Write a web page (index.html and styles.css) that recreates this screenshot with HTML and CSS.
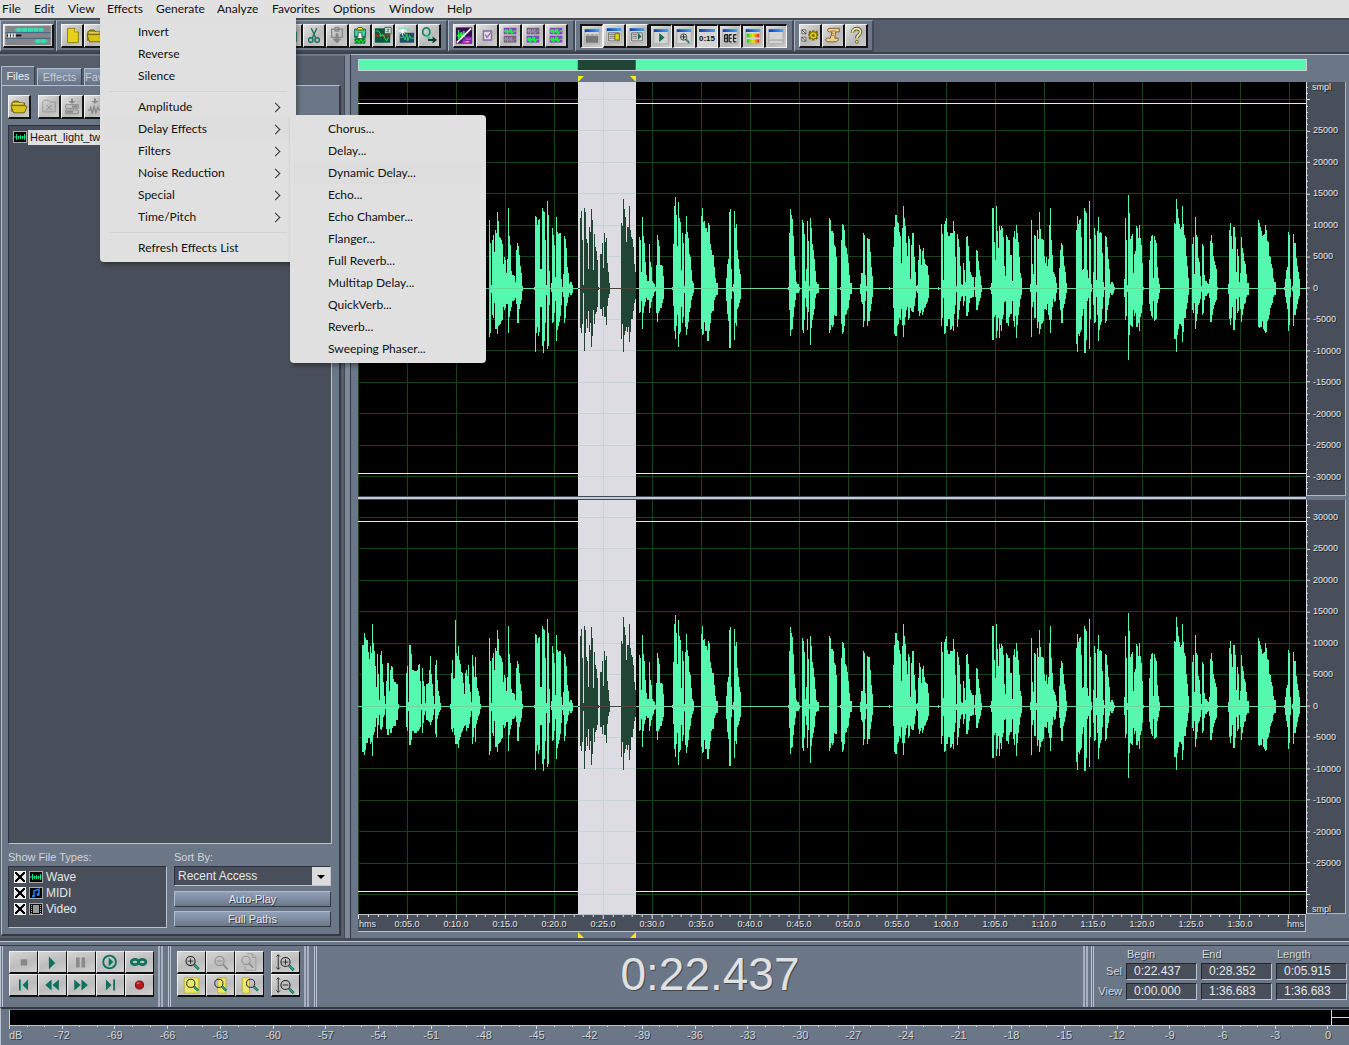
FILE: index.html
```html
<!DOCTYPE html>
<html lang="en">
<head>
<meta charset="utf-8">
<title>Audio editor</title>
<link rel="stylesheet" href="styles.css">
</head>
<body>
<svg class="defs" aria-hidden="true">
  <defs>
    <symbol id="new" viewBox="0 0 20 20"><path d="M5 2h8l4 4v12H5z" fill="#e6d21c" stroke="#8c7a00"/><path d="M13 2v4h4" fill="#fff6a0" stroke="#8c7a00"/></symbol>
    <symbol id="folder" viewBox="0 0 20 20"><path d="M2 16V6l2-2h5l2 2h5v3" fill="#b09a00" stroke="#5d5200"/><path d="M1 9h15l3 1-3 7H4z" fill="#d8c414" stroke="#6d6000"/><path d="M3 7h12" stroke="#fff38a"/></symbol>
    <symbol id="copy" viewBox="0 0 20 20"><path d="M5 2h8v11H5zM9 6h7v11H9z" fill="#c9eee2" stroke="#17705b"/><path d="M11 10h3M11 12h3M11 14h3" stroke="#17705b"/></symbol>
    <symbol id="cut" viewBox="0 0 20 20"><path d="M7 2l5 11M13 2L8 13" fill="none" stroke="#17705b" stroke-width="1.5"/><circle cx="6.500" cy="15" r="2.500" fill="none" stroke="#17705b" stroke-width="1.500"/><circle cx="13.500" cy="15" r="2.500" fill="none" stroke="#17705b" stroke-width="1.500"/></symbol>
    <symbol id="paste" viewBox="0 0 20 20"><path d="M4 3h12v9H4zM8 1h4v4H8z" fill="none" stroke="#8a8a8a" stroke-width="1.5"/><path d="M9 8h2v6h3l-4 4-4-4h3z" fill="#858585" stroke="#858585"/></symbol>
    <symbol id="pastemix" viewBox="0 0 20 20"><path d="M4 3h12v9H4z" fill="#3bd5ac" stroke="#105c46"/><path d="M8 1h4l2 3H6z" fill="#f2e52c" stroke="#554c00"/><path d="M8 7h4v4h3l-5 3-5-3h3z" fill="#fff" stroke="#222" stroke-width=".7"/><path d="M4 13h12v6H4z" fill="#073"/><path d="M4 18l3-3 2 3 2-4 2 4 3-4" fill="none" stroke="#21ff31"/></symbol>
    <symbol id="trim" viewBox="0 0 20 20"><path d="M1 2h17v16H1z" fill="#075643"/><path d="M1 10h17" stroke="#e01919" stroke-width="2"/><path d="M2 5h3l2 3v3l3-2 2 4 2 3 2-4" fill="none" stroke="#1dfa45"/><path d="M12 1h7v7h-7z" fill="#eee" stroke="#176653"/><path d="M14 3h3l-3 3h3" fill="none" stroke="#176653"/></symbol>
    <symbol id="zero" viewBox="0 0 20 20"><path d="M3 7h16v11H3z" fill="#244866"/><path d="M3 12h4v-2l2 5 2-7 1 8 2-6 1 3h4" fill="none" stroke="#20e65b"/><path d="M6 1v9M2 5h9M3 2l6 7M9 2L3 9" stroke="#fff"/><path d="M2 2h8M11 3h4" stroke="#35d9a9" stroke-dasharray="2 1"/></symbol>
    <symbol id="convert" viewBox="0 0 20 20"><ellipse cx="7" cy="6" rx="4" ry="4.500" fill="none" stroke="#178668" stroke-width="2"/><path d="M6 9c4 1 1 4 5 4" fill="none" stroke="#35c89d" stroke-width="2"/><path d="M9 14h5v-3l5 4-5 4v-3H9z" fill="#123f35"/></symbol>
    <symbol id="spectral" viewBox="0 0 20 20"><path d="M1 1h18v18H1z" fill="#3b0c53"/><path d="M11 11h8v8H6z" fill="#7d2aa8"/><path d="M2 10h2V4v10l3-8v8l3-9v7" fill="none" stroke="#23ef42" stroke-width="1.500"/><path d="M2 18L18 2" stroke="#eee" stroke-width="2"/><path d="M9 17h6M12 14h6" stroke="#e830df" stroke-width="2"/><path d="M12 17h4" stroke="#eee514"/></symbol>
    <symbol id="check" viewBox="0 0 20 20"><path d="M6 5h9v10H6z" fill="#ddd" stroke="#8c67b3" stroke-width="1.500"/><path d="M8 9l2 3 5-6" fill="none" stroke="#9a70c8" stroke-width="1.500"/></symbol>
    <symbol id="wavehalf" viewBox="0 0 20 8"><path d="M3 0h14v8H3z" fill="#8a3bd0"/><path d="M3 4h2V2v4l2-4v5l3-5v4l2-4v5l3-3h2" fill="none" stroke="#20ee3e" stroke-width="1.500"/></symbol>
    <symbol id="graywave" viewBox="0 0 20 8"><path d="M3 0h14v8H3z" fill="#73607f"/><path d="M3 4h2V2v4l2-4v5l3-5v4l2-4v5l3-3h2" fill="none" stroke="#a596ad"/></symbol>
    <symbol id="win" viewBox="0 0 20 20"><path d="M2 2h16v16H2z" fill="#d5d5d5" stroke="#aaa"/><path d="M2 2h16v3H2z" fill="url(#blue)"/></symbol>
    <symbol id="gear" viewBox="0 0 22 20"><path d="M1 3h5v5H1zM1 12h5v5H1z" fill="#ddd" stroke="#555"/><path d="M1 3l5 5M1 12l5 5" stroke="#333"/><path d="M9 9h12M15 4v12M10 5l10 9M20 5L10 14" stroke="#756300" stroke-width="3"/><circle cx="15" cy="10" r="4.500" fill="#dbc91c" stroke="#756300"/><circle cx="15" cy="10" r="1.500" fill="#554900"/></symbol>
    <symbol id="script" viewBox="0 0 20 20"><path d="M7 2h10v4h-4l-1 7h4c0 5-5 4-11 4-4 0-4-5 0-4h2l2-7H6c-3 0-3-4 1-4z" fill="#ecd091" stroke="#79571d"/><path d="M8 5h5M11 8h-2M11 10H8" stroke="#a57b31"/></symbol>
    <symbol id="help" viewBox="0 0 20 20"><path d="M6 7c0-6 9-6 9-1 0 4-4 3-4 7" fill="none" stroke="#5a553c" stroke-width="4"/><path d="M6 7c0-6 9-6 9-1 0 4-4 3-4 7" fill="none" stroke="#f1eb98" stroke-width="2"/><circle cx="11" cy="17" r="1.600" fill="#eee47c" stroke="#5a553c"/></symbol>
    <symbol id="closefile" viewBox="0 0 20 20"><path d="M3 16V5l2-2h4l2 2h6v11z" fill="none" stroke="#999"/><path d="M7 8l6 6M13 8l-6 6" stroke="#888"/></symbol>
    <symbol id="insert" viewBox="0 0 20 20"><path d="M9 1h2v3h3l-4 3-4-3h3z" fill="#888"/><path d="M3 8h14v4H3zM3 14h14v4H3z" fill="none" stroke="#888"/><path d="M10 10h6M4 16h7" stroke="#888" stroke-width="2"/></symbol>
    <symbol id="insertwave" viewBox="0 0 20 20"><path d="M9 1h2v3h3l-4 3-4-3h3z" fill="#888"/><path d="M2 14h3v-4l2 8 2-8 2 7 2-6 2 3h3" fill="none" stroke="#888" stroke-width="1.500"/></symbol>
    <symbol id="wavefile" viewBox="0 0 14 12"><path d="M0 0h14v12H0z" fill="#aaa"/><path d="M1 1h12v10H1z" fill="#000"/><path d="M1 6h12M3.500 3v6M5.500 5v3M7.500 4v4M9.500 5v3M11.500 3v6" stroke="#12dd83"/></symbol>
    <symbol id="midifile" viewBox="0 0 14 12"><path d="M0 0h14v12H0z" fill="#aaa"/><path d="M1 1h12v10H1z" fill="#000"/><path d="M5 9V4l5-2v5" fill="none" stroke="#1887ff" stroke-width="1.500"/><circle cx="4.500" cy="9" r="1.500" fill="#1887ff"/><circle cx="9" cy="7.500" r="1.500" fill="#1887ff"/></symbol>
    <symbol id="videofile" viewBox="0 0 14 12"><path d="M0 0h14v12H0z" fill="#aaa"/><path d="M1 1h12v10H1z" fill="#111"/><path d="M4 2h6v8H4z" fill="#999"/><path d="M2.500 2v9M11.500 2v9" stroke="#bbb" stroke-dasharray="1 1"/></symbol>
    <symbol id="lens" viewBox="0 0 20 20"><path d="M12 12l5 5" stroke="#176954" stroke-width="3"/><path d="M12 12l5 5" stroke="#2ee5a9"/><circle cx="8" cy="8" r="5" fill="none" stroke="#222" stroke-width="1.200"/></symbol>
    <symbol id="graylens" viewBox="0 0 20 20"><path d="M12 12l5 5" stroke="#8b8b8b" stroke-width="2"/><circle cx="8" cy="8" r="5" fill="none" stroke="#8b8b8b" stroke-width="1.200"/></symbol>
    <linearGradient id="blue"><stop stop-color="#133cae"/><stop offset="1" stop-color="#3da2f5"/></linearGradient>
    <linearGradient id="meter"><stop stop-color="#12c91a"/><stop offset=".5" stop-color="#eee514"/><stop offset="1" stop-color="#e92216"/></linearGradient>
  </defs>
</svg>

<nav class="menubar" aria-label="Main menu">
  <button>File</button><button>Edit</button><button>View</button>
  <div class="menu-holder">
    <button>Effects</button>
    <div class="popup effects-menu">
      <button>Invert</button><button>Reverse</button><button>Silence</button><hr>
      <button class="more">Amplitude</button>
      <div class="submenu-holder">
        <button class="more open">Delay Effects</button>
        <div class="popup delay-menu">
          <button>Chorus...</button><button>Delay...</button><button class="hover">Dynamic Delay...</button><button>Echo...</button><button>Echo Chamber...</button><button>Flanger...</button><button>Full Reverb...</button><button>Multitap Delay...</button><button>QuickVerb...</button><button>Reverb...</button><button>Sweeping Phaser...</button>
        </div>
      </div>
      <button class="more">Filters</button><button class="more">Noise Reduction</button><button class="more">Special</button><button class="more">Time/Pitch</button><hr>
      <button>Refresh Effects List</button>
    </div>
  </div>
  <button>Generate</button><button>Analyze</button><button>Favorites</button><button>Options</button><button>Window</button><button>Help</button>
</nav>

<header class="toolbar">
  <div class="group">
    <button class="tool wide" aria-label="Switch to multitrack view"><svg viewBox="0 0 48 20"><path d="M0 0h48v20H0z" fill="#83878b"/><path d="M0 7h48M0 13h48" stroke="#42617f"/><path d="M12 4h28M32 16h12" stroke="#36dfad" stroke-width="4" stroke-dasharray="5 1"/><path d="M10 4h31M30 16h15" stroke="#36dfad"/><path d="M2 10h15" stroke="#111" stroke-width="2"/><path d="M3 10h9" stroke="#eee" stroke-width="4" stroke-dasharray="2 1"/></svg></button>
  </div>
  <div class="group main-tools">
    <button class="tool" aria-label="New"><svg><use href="#new"/></svg></button>
    <button class="tool" aria-label="Open"><svg><use href="#folder"/></svg></button>
    <span class="tool-space"></span>
    <button class="tool" aria-label="Copy"><svg><use href="#copy"/></svg></button>
    <button class="tool" aria-label="Cut"><svg><use href="#cut"/></svg></button>
    <button class="tool" aria-label="Paste"><svg><use href="#paste"/></svg></button>
    <button class="tool" aria-label="Mix paste"><svg><use href="#pastemix"/></svg></button>
    <button class="tool" aria-label="Trim"><svg><use href="#trim"/></svg></button>
    <button class="tool" aria-label="Zero crossings"><svg><use href="#zero"/></svg></button>
    <button class="tool" aria-label="Convert"><svg><use href="#convert"/></svg></button>
  </div>
  <div class="group">
    <button class="tool" aria-label="Spectral view"><svg><use href="#spectral"/></svg></button>
    <button class="tool" aria-label="Snap"><svg><use href="#check"/></svg></button>
    <button class="tool" aria-label="Left channel"><svg viewBox="0 0 20 20"><use href="#wavehalf" width="20" y="1" height="8"/><use href="#graywave" width="20" y="10" height="8"/></svg></button>
    <button class="tool" aria-label="Right channel"><svg viewBox="0 0 20 20"><use href="#graywave" width="20" y="1" height="8"/><use href="#wavehalf" width="20" y="10" height="8"/></svg></button>
    <button class="tool" aria-label="Both channels"><svg viewBox="0 0 20 20"><use href="#wavehalf" width="20" y="1" height="8"/><use href="#wavehalf" width="20" y="10" height="8"/></svg></button>
  </div>
  <div class="group">
    <button class="tool pressed" aria-label="Organizer"><svg viewBox="0 0 20 20"><use href="#win"/><path d="M3 9h14v8H3z" fill="#777"/><path d="M4 8h3M9 8h3M14 8h2" stroke="#888"/></svg></button>
    <button class="tool" aria-label="Cue list"><svg viewBox="0 0 20 20"><use href="#win"/><path d="M4 7h12v9H4z" fill="none" stroke="#666"/><path d="M5 9h8M5 11h8M5 13h8" stroke="#777"/><path d="M11 8h5v7h-5z" fill="#ddd326" stroke="#766d00"/></svg></button>
    <button class="tool" aria-label="Play list"><svg viewBox="0 0 20 20"><use href="#win"/><path d="M4 7h12v9H4z" fill="none" stroke="#666"/><path d="M5 9h5M5 11h5M5 13h5" stroke="#777"/><path d="M11 7l4 4-4 4z" fill="#176954"/></svg></button>
    <button class="tool pressed" aria-label="Transport"><svg viewBox="0 0 20 20"><use href="#win"/><path d="M8 6l6 5-6 5z" fill="#176954"/></svg></button>
    <button class="tool pressed" aria-label="Zoom"><svg viewBox="0 0 20 20"><use href="#win"/><use href="#lens" x="4" y="5" width="14" height="14"/><path d="M7 10.500h5M9.500 8v5" stroke="#222"/></svg></button>
    <button class="tool pressed clock" aria-label="Time window">0:15</button>
    <button class="tool pressed" aria-label="Selection controls"><svg viewBox="0 0 20 20"><use href="#win"/><path d="M4 8h3v8H4h3M4 12h3M9 8h3M9 12h3M9 16h3M9 8v8M14 8h3M14 12h3M14 16h3M14 8v8M4 8v8" fill="none" stroke="#222" stroke-width="1.500"/></svg></button>
    <button class="tool pressed" aria-label="Level meters"><svg viewBox="0 0 20 20"><use href="#win"/><path d="M3 7h14v4H3zM3 13h14v4H3z" fill="url(#meter)"/></svg></button>
    <button class="tool pressed" aria-label="Status bar"><svg viewBox="0 0 20 20"><use href="#win"/><path d="M2 14h16" stroke="#999"/></svg></button>
  </div>
  <div class="group last">
    <button class="tool" aria-label="Settings"><svg><use href="#gear"/></svg></button>
    <button class="tool" aria-label="Scripts"><svg><use href="#script"/></svg></button>
    <button class="tool" aria-label="Help"><svg><use href="#help"/></svg></button>
  </div>
</header>

<main class="workspace">
  <aside class="organizer">
    <div class="tabs"><button class="active">Files</button><button>Effects</button><button>Favorites</button></div>
    <section class="tab-panel">
      <div class="file-tools">
        <button class="tool" aria-label="Open file"><svg><use href="#folder"/></svg></button>
        <button class="tool gap" aria-label="Close file"><svg><use href="#closefile"/></svg></button>
        <button class="tool" aria-label="Insert in multitrack"><svg><use href="#insert"/></svg></button>
        <button class="tool" aria-label="Edit file"><svg><use href="#insertwave"/></svg></button>
      </div>
      <div class="file-list"><div class="file"><svg><use href="#wavefile"/></svg><span>Heart_light_two</span></div></div>
      <div class="file-options">
        <fieldset>
          <legend>Show File Types:</legend>
          <div class="types">
            <label><input type="checkbox" checked><svg><use href="#wavefile"/></svg>Wave</label>
            <label><input type="checkbox" checked><svg><use href="#midifile"/></svg>MIDI</label>
            <label><input type="checkbox" checked><svg><use href="#videofile"/></svg>Video</label>
          </div>
        </fieldset>
        <div class="sorting">
          <label for="sort">Sort By:</label>
          <div class="select-box"><select id="sort"><option>Recent Access</option></select></div>
          <button>Auto-Play</button><button>Full Paths</button>
        </div>
      </div>
    </section>
  </aside>

  <section class="editor" aria-label="Waveform">
    <div class="overview"><svg viewBox="0 0 948 10" preserveAspectRatio="none"><path d="M219 0h58v10h-58z"/></svg></div>
    <svg class="markers" viewBox="0 0 948 6" preserveAspectRatio="none"><path d="M220 0h6l-6 6zM278 0h-6l6 6z"/></svg>
    <div class="wave-grid">
      <div class="tracks"><svg class="track" viewBox="0 0 948 414" preserveAspectRatio="none"></svg><svg class="track" viewBox="0 0 948 414" preserveAspectRatio="none"></svg></div>
      <div class="levels">
        <div class="scale upper"><svg class="level-ticks" viewBox="0 0 5 414" preserveAspectRatio="none"></svg><b>smpl</b><div><span>25000</span><span>20000</span><span>15000</span><span>10000</span><span>5000</span><span>0</span><span>-5000</span><span>-10000</span><span>-15000</span><span>-20000</span><span>-25000</span><span>-30000</span></div></div>
        <div class="scale lower"><svg class="level-ticks" viewBox="0 0 5 414" preserveAspectRatio="none"></svg><div><span>30000</span><span>25000</span><span>20000</span><span>15000</span><span>10000</span><span>5000</span><span>0</span><span>-5000</span><span>-10000</span><span>-15000</span><span>-20000</span><span>-25000</span></div><b>smpl</b></div>
      </div>
      <div class="timeline">
        <svg class="time-ticks" viewBox="0 0 948 5" preserveAspectRatio="none"></svg>
        <b>hms</b><div><span>0:05.0</span><span>0:10.0</span><span>0:15.0</span><span>0:20.0</span><span>0:25.0</span><span>0:30.0</span><span>0:35.0</span><span>0:40.0</span><span>0:45.0</span><span>0:50.0</span><span>0:55.0</span><span>1:00.0</span><span>1:05.0</span><span>1:10.0</span><span>1:15.0</span><span>1:20.0</span><span>1:25.0</span><span>1:30.0</span></div><b>hms</b>
      </div>
    </div>
    <svg class="markers bottom" viewBox="0 0 948 6" preserveAspectRatio="none"><path d="M220 0v6h6zM278 0v6h-6z"/></svg>
  </section>
</main>

<section class="controls">
  <div class="dock transport">
    <div class="keys five">
      <button aria-label="Stop"><svg viewBox="0 0 28 22"><path d="M11 8h7v7h-7z" fill="#888"/></svg></button>
      <button aria-label="Play"><svg viewBox="0 0 28 22"><path d="M10 5l7 7-7 7z" fill="#0c725d"/></svg></button>
      <button aria-label="Pause"><svg viewBox="0 0 28 22"><path d="M8 6h4v11H8zM14 6h4v11h-4z" fill="#8a8a8a"/></svg></button>
      <button aria-label="Play to end"><svg viewBox="0 0 28 22"><circle cx="13" cy="11" r="7" fill="none" stroke="#0c725d" stroke-width="2"/><path d="M12 6l5 5-5 5z" fill="#0c725d"/></svg></button>
      <button aria-label="Loop"><svg viewBox="0 0 28 22"><ellipse cx="9" cy="11" rx="4" ry="3" fill="none" stroke="#0c725d" stroke-width="3"/><ellipse cx="17" cy="11" rx="4" ry="3" fill="none" stroke="#0c725d" stroke-width="3"/></svg></button>
      <button aria-label="Go to beginning"><svg viewBox="0 0 28 22"><path d="M9 5h2v12H9zM19 5v12l-6-6z" fill="#0c725d"/></svg></button>
      <button aria-label="Rewind"><svg viewBox="0 0 28 22"><path d="M13 5v12l-7-6zM21 5v12l-7-6z" fill="#0c725d"/></svg></button>
      <button aria-label="Fast forward"><svg viewBox="0 0 28 22"><path d="M6 5l7 6-7 6zM14 5l7 6-7 6z" fill="#0c725d"/></svg></button>
      <button aria-label="Go to end"><svg viewBox="0 0 28 22"><path d="M9 5l6 6-6 6zM17 5h2v12h-2z" fill="#0c725d"/></svg></button>
      <button aria-label="Record"><svg viewBox="0 0 28 22"><circle cx="14" cy="11" r="4.500" fill="#b7181c" stroke="#651014"/><path d="M11 9h3" stroke="#ff9994"/></svg></button>
    </div>
  </div>
  <div class="dock zooming">
    <div class="keys three">
      <button aria-label="Zoom in"><svg viewBox="0 0 28 22"><use href="#lens" x="5" y="2" width="20" height="20"/><path d="M10 10h6M13 7v6" stroke="#222"/></svg></button>
      <button aria-label="Zoom out"><svg viewBox="0 0 28 22"><use href="#graylens" x="5" y="2" width="20" height="20"/><path d="M10 10h6" stroke="#888"/></svg></button>
      <button aria-label="Zoom full"><svg viewBox="0 0 28 22"><path d="M11 2h6l4 4v14H9v-4" fill="none" stroke="#999"/><path d="M17 2v4h4" fill="none" stroke="#999"/><use href="#graylens" x="3" y="2" width="18" height="18"/></svg></button>
      <button aria-label="Zoom to selection"><svg viewBox="0 0 28 22"><path d="M6 3h16v17H6z" fill="#ebe76d" stroke="#b5ad31"/><use href="#lens" x="6" y="2" width="18" height="18"/></svg></button>
      <button aria-label="Zoom left edge"><svg viewBox="0 0 28 22"><path d="M11 3h9v17h-9z" fill="#ebe76d" stroke="#b5ad31"/><use href="#lens" x="5" y="2" width="18" height="18"/></svg></button>
      <button aria-label="Zoom right edge"><svg viewBox="0 0 28 22"><path d="M6 3h8v17H6z" fill="#ebe76d" stroke="#b5ad31"/><use href="#lens" x="8" y="2" width="18" height="18"/></svg></button>
    </div>
    <div class="keys one">
      <button aria-label="Vertical zoom in"><svg viewBox="0 0 28 22"><path d="M6 3v16M4 5l2-2 2 2M4 17l2 2 2-2" fill="none" stroke="#222"/><use href="#lens" x="6" y="3" width="20" height="20"/><path d="M11 11h6M14 8v6" stroke="#222"/></svg></button>
      <button aria-label="Vertical zoom out"><svg viewBox="0 0 28 22"><path d="M6 3v16M4 5l2-2 2 2M4 17l2 2 2-2" fill="none" stroke="#222"/><use href="#lens" x="6" y="3" width="20" height="20"/><path d="M11 11h6" stroke="#222"/></svg></button>
    </div>
  </div>
  <output class="dock time">0:22.437</output>
  <div class="dock selection">
    <table>
      <thead><tr><td></td><th>Begin</th><th>End</th><th>Length</th></tr></thead>
      <tbody>
        <tr><th>Sel</th><td><input aria-label="Selection begin" value="0:22.437"></td><td><input aria-label="Selection end" value="0:28.352"></td><td><input aria-label="Selection length" value="0:05.915"></td></tr>
        <tr><th>View</th><td><input aria-label="View begin" value="0:00.000"></td><td><input aria-label="View end" value="1:36.683"></td><td><input aria-label="View length" value="1:36.683"></td></tr>
      </tbody>
    </table>
  </div>
</section>

<footer class="meter">
  <div class="meter-bar"><i></i><em></em></div>
  <svg class="meter-ticks" viewBox="0 0 1340 4" preserveAspectRatio="none"></svg>
  <div class="meter-scale"><b>dB</b><div><span>-72</span><span>-69</span><span>-66</span><span>-63</span><span>-60</span><span>-57</span><span>-54</span><span>-51</span><span>-48</span><span>-45</span><span>-42</span><span>-39</span><span>-36</span><span>-33</span><span>-30</span><span>-27</span><span>-24</span><span>-21</span><span>-18</span><span>-15</span><span>-12</span><span>-9</span><span>-6</span><span>-3</span><span>0</span></div></div>
</footer>
<script src="wave.js"></script>
</body>
</html>
```
FILE: styles.css
```css
* { box-sizing: border-box; }
body {
  margin: 0; min-height: 100vh; display: flex; flex-direction: column;
  background: #6b7686; color: #e4e6e8; overflow: hidden;
  font: 11px/14px "Liberation Sans", Arial, sans-serif;
}
button, input, select { font: inherit; color: inherit; border-radius: 0; margin: 0; padding: 0; }
button { border: 0; background: none; }
svg { display: block; }
.defs { position: absolute; width: 0; height: 0; }

/* menus */
.menubar {
  display: grid; grid-template-columns: 32px 34px 39px 49px 61px 55px 61px 56px 58px auto;
  justify-content: start; height: 18px; padding-left: 2px; background: #e1e1e1; color: #111;
  font: 12px/18px Lato, "Open Sans", sans-serif; position: relative; z-index: 5;
}
.menubar button { text-align: left; white-space: nowrap; }
.menu-holder, .submenu-holder { position: relative; }
.popup { position: absolute; display: flex; flex-direction: column; padding: 3px 4px; background: #e0e0e0; box-shadow: 2px 3px 4px #0005; }
.effects-menu { left: -7px; top: 18px; width: 196px; border-radius: 0 0 4px 4px; }
.delay-menu { left: 186px; top: -3px; width: 196px; border-radius: 4px; }
.popup button { height: 22px; width: 100%; padding-left: 34px; line-height: 22px; }
.popup hr { border: 0; border-top: 1px solid #d2d2d2; height: 1px; margin: 4px 5px; }
.popup .open, .popup .hover { background: #dddddd; }
.more { position: relative; }
.more::after { content: ""; position: absolute; right: 13px; top: 8px; width: 6px; height: 6px; border: solid #333; border-width: 1px 1px 0 0; transform: rotate(45deg); }

/* toolbar */
.toolbar { display: flex; height: 36px; border-top: 2px solid #454b55; border-bottom: 2px solid #3c424c; background: #565d6b; }
.group { display: flex; padding: 3px 5px 0 4px; border: solid; border-width: 1px 2px 2px 1px; border-color: #929cac #434955 #434955 #aab4c4; background: #6c7787; }
.group:first-child { padding-left: 2px; padding-right: 0; }
.group.last { padding-right: 4px; }
.tool { width: 23px; height: 24px; flex: none; padding: 1px; background: linear-gradient(135deg, #e1e1e1, #b9b9b9 60%, #cdcdcd); border: solid; border-width: 1px 2px 2px 1px; border-color: #f3f3f3 #141414 #141414 #f3f3f3; }
.tool svg { width: 18px; height: 19px; }
.tool.wide { width: 51px; }
.tool.wide svg { width: 46px; }
.tool.pressed { border-width: 2px 1px 1px 2px; border-color: #141414 #f3f3f3 #f3f3f3 #141414; }
.tool.clock { color: #111; padding: 4px 0 0; font: bold 8px/14px "Liberation Sans", sans-serif; background: linear-gradient(90deg, #133cae, #3da2f5) 50% 3px / 16px 3px no-repeat #d5d5d5; }
.tool-space { flex: 0 0 173px; }

/* organizer */
.workspace { flex: 1; display: flex; min-height: 0; border-bottom: 3px solid #454b57; box-shadow: 0 1px #bcc5d3; }
.organizer { width: 350px; flex: none; display: flex; flex-direction: column; padding: 12px 4px 2px 1px; background: #565d6b; border-right: 5px solid #7d899a; box-shadow: inset 0 2px #6c7787, inset -1px 0 #434955; }
.tabs { display: flex; align-items: flex-end; gap: 2px; height: 19px; color: #c5cbd3; }
.tabs button { height: 17px; width: 45px; background: linear-gradient(#8a9ab5, #677284); border: 1px solid #aeb9ca; border-bottom: 0; border-right-color: #333b47; }
.tabs .active { width: 34px; height: 19px; color: #eceef0; background: #6b7686; }
.tab-panel { flex: 1; display: flex; flex-direction: column; min-height: 0; padding: 9px 7px 5px 6px; border: solid; border-width: 1px 2px 2px 1px; border-color: #b4bfce #343a45 #343a45 #b4bfce; background: #6b7686; }
.file-tools { display: flex; height: 30px; }
.file-tools .gap { margin-left: 7px; }
.file-list { flex: 1; padding: 3px 4px; background: #494f5a; border: 1px solid #2c323b; border-right-color: #b9c3d0; border-bottom-color: #b9c3d0; }
.file { display: flex; align-items: center; gap: 1px; height: 16px; }
.file svg, .types svg { width: 14px; height: 12px; flex: none; }
.file span { background: #e1e1e1; color: #14151c; padding: 0 2px; line-height: 15px; width: 90px; }
.file-options { display: flex; gap: 7px; height: 85px; padding-top: 6px; }
fieldset { margin: 0; padding: 0; border: 0; width: 159px; }
legend, .sorting label { padding: 0; height: 14px; color: #d0d5db; display: block; }
.types { height: 62px; padding: 2px 5px; background: #494f5a; border: 1px solid #2c323b; border-right-color: #b9c3d0; border-bottom-color: #b9c3d0; margin-top: 2px; font-size: 12px; }
.types label { display: flex; align-items: center; height: 16px; gap: 3px; }
.types input { appearance: none; width: 12px; height: 12px; border: 1px solid #fff; background: linear-gradient(45deg, transparent 43%, #000 43% 57%, transparent 57%), linear-gradient(-45deg, #e4e4e4 43%, #000 43% 57%, #e4e4e4 57%); }
.sorting { width: 157px; }
.select-box { position: relative; height: 20px; margin: 2px 0 5px; }
.select-box::after { content: ""; position: absolute; right: 6px; top: 9px; border: 4px solid transparent; border-top-color: #000; border-bottom: 0; pointer-events: none; }
select { appearance: none; width: 100%; height: 20px; padding-left: 3px; font-size: 12px; background: linear-gradient(90deg, transparent 137px, #dcdcdc 137px) #494f5a; border: 1px solid #2c323b; border-right-color: #b9c3d0; border-bottom-color: #b9c3d0; }
.sorting button { display: block; width: 100%; height: 16px; margin-bottom: 4px; line-height: 13px; background: linear-gradient(#92a0b8, #6d788a); border: 1px solid #aebbd0; border-right-color: #343a45; border-bottom-color: #343a45; text-shadow: 1px 1px #343a45; }

/* wave editor */
.editor { flex: 1; min-width: 0; display: flex; flex-direction: column; padding: 4px 3px 0 7px; border-top: 1px solid #acb7c5; border-left: 1px solid #343a45; }
.overview { height: 12px; margin-right: 39px; border: 1px solid #c8d1dc; background: #55f8ae; }
.overview svg { width: 100%; height: 10px; fill: #204534; }
.markers { flex: none; width: calc(100% - 40px); height: 6px; margin-top: 5px; fill: #f5ea18; }
.markers.bottom { margin: 0; }
.wave-grid { flex: 1; min-height: 0; display: grid; grid-template: minmax(0, 1fr) 18px / minmax(0, 1fr) 40px; }
.tracks { display: grid; grid-template-rows: 1fr 1fr; gap: 4px; background: linear-gradient(#c3cbd6, #c3cbd6) 0 50% / 100% 2px no-repeat #434955; }
.track { width: 100%; height: 100%; min-height: 0; background: #000; }
.levels { display: grid; grid-template-rows: 1fr 1fr; gap: 4px; font-size: 9px; text-shadow: 1px 1px #20252c; }
.scale { position: relative; display: flex; flex-direction: column; background: #494f5a; border-left: 1px solid #d6dbe1; border-right: 1px solid #aeb8c5; border-bottom: 1px solid #aeb8c5; min-height: 0; }
.scale svg { position: absolute; left: 0; top: 0; width: 5px; height: 100%; stroke: #e0e4e8; }
.scale b, .timeline b { font-weight: normal; }
.scale b { padding-left: 5px; line-height: 10px; }
.scale div { flex: 1; display: flex; flex-direction: column; justify-content: space-between; padding-left: 6px; }
.scale span { height: 0; line-height: 0; white-space: nowrap; }
.upper div { margin: 38px 0 18px; }
.lower div { margin: 17px 0 41px; }
.lower b { height: 9px; }
.timeline { position: relative; display: flex; background: #494f5a; border-top: 1px solid #b9c3d0; border-right: 1px solid #b9c3d0; border-bottom: 1px solid #b9c3d0; font-size: 9px; line-height: 18px; text-shadow: 1px 1px #20252c; }
.timeline svg { position: absolute; left: 0; top: 0; width: 100%; height: 5px; stroke: #e0e4e8; }
.timeline b { width: 18px; padding-left: 1px; }
.timeline div { flex: 1; display: flex; justify-content: space-between; margin: 0 46px 0 31px; }
.timeline span { width: 0; display: flex; justify-content: center; }
.timeline b:last-child { width: 19px; }

/* transport controls */
.controls { display: flex; height: 62px; margin-top: 4px; border-top: 1px solid #343a45; }
.dock { border-left: 3px double #b9c3d0; border-right: 5px double #a6b0bf; }
.transport { display: flex; padding: 5px 4px 0 6px; }
.zooming { display: flex; gap: 7px; margin-left: 5px; padding: 5px 4px 0 6px; }
.keys { display: grid; grid-template-rows: 23px 23px; align-content: start; }
.five { grid-template-columns: repeat(5, 29px); }
.three { grid-template-columns: repeat(3, 29px); }
.one { grid-template-columns: 29px; }
.keys button { background: linear-gradient(160deg, #d5d5d5, #bcbcbc 55%, #d1d1d1); border: solid; border-width: 1px 1px 2px; border-color: #eee #111 #111 #eee; }
.keys svg { width: 27px; height: 20px; }
.time { flex: 1; margin: 0 0 0 5px; padding-left: 20px; text-align: center; font-size: 46px; line-height: 56px; color: #e1e1e1; text-shadow: 1px 1px #404751; }
.selection { margin-left: 3px; border-right: 0; padding: 1px 2px 0 0; }
table { border-collapse: collapse; }
th { font-weight: normal; text-align: left; height: 14px; padding: 0 0 0 1px; color: #d2d6dc; text-shadow: 1px 1px #343a45; }
tbody th { text-align: right; width: 32px; padding-right: 4px; }
td { padding: 0 4px 0 0; height: 20px; }
thead td { height: 14px; }
td:last-child { padding-right: 0; }
td input { display: block; width: 71px; height: 17px; padding: 0 0 0 7px; font-size: 12px; line-height: 15px; background: #494f5a; border: 1px solid #20252d; border-right-color: #bac4d1; border-bottom-color: #bac4d1; }

/* level meter */
.meter { height: 38px; padding: 1px 0 0 8px; border-top: 2px solid #343a45; border-left: 1px solid #b9c3d0; }
.meter-bar { height: 16px; background: #000; border-bottom: 1px solid #b9c3d0; display: flex; align-items: center; }
.meter-bar i { width: 1px; height: 15px; background: #e8e018; }
.meter-bar em { width: 18px; height: 15px; margin-left: auto; border-left: 1px solid #d2d8df; background: linear-gradient(#d2d8df, #d2d8df) 0 50% / 100% 1px no-repeat; }
.meter-ticks { width: 100%; height: 4px; stroke: #d2d8df; }
.meter-scale { display: flex; height: 14px; line-height: 10px; color: #d1d6dc; text-shadow: 1px 1px #343a45; }
.meter-scale b { width: 53px; font-weight: normal; }
.meter-scale div { flex: 1; display: flex; justify-content: space-between; margin-right: 21px; }
.meter-scale span { width: 0; display: flex; justify-content: center; }
```
FILE: wave.js
```js
// Peak columns: start offset, height above and height below the zero line.
const peaks = `4 61 45,6 73 48,7 68 43,8 66 36,10 54 31,11 47 31,12 60 37,13 53 35,14 82 49,15 63 28,16 55 25,17 40 20,18 19 11,19 52 31,20 32 18,21 6 8,22 51 22,23 55 23,24 42 20,25 24 10,26 10 8,27 2 2,28 25 22,29 43 28,31 15 22,32 36 26,33 40 26,34 39 21,35 27 19,36 24 19,38 22 13,40 2 2,41 0 0,
48 33 20,49 40 24,50 4 4,51 61 38,53 52 33,54 36 24,56 35 26,59 36 24,60 41 24,61 42 22,62 25 20,63 2 3,64 38 26,65 25 16,66 20 8,67 3 4,68 22 13,70 23 14,71 36 15,72 50 18,73 32 15,74 22 13,75 10 8,76 2 2,77 41 27,78 46 30,79 26 12,80 15 8,81 10 5,82 3 3,83 0 0,
92 2 2,93 33 22,94 46 25,95 27 21,96 28 28,97 86 37,98 53 37,99 50 37,100 60 41,101 46 33,102 42 30,103 34 26,104 33 24,105 23 21,106 12 19,107 33 18,108 36 24,109 30 21,110 41 21,111 22 17,112 14 10,113 4 4,114 51 37,115 40 30,116 29 21,117 49 35,118 29 17,119 18 13,120 15 9,121 10 7,122 2 2,123 0 0,
131 68 48,132 45 44,133 3 4,134 48 26,135 53 29,136 36 14,137 58 40,138 55 40,139 76 45,140 67 37,141 51 36,142 50 35,143 48 32,144 44 31,145 24 18,146 31 21,147 28 19,148 15 15,149 29 15,150 80 44,151 52 28,152 43 22,153 17 18,154 13 12,156 12 11,157 6 9,158 38 15,159 45 34,160 42 34,161 33 20,162 22 15,163 15 11,164 2 2,165 0 0,
176 1 1,177 72 63,178 71 44,179 63 38,180 68 47,181 69 43,182 19 18,184 80 57,185 77 64,186 76 52,187 48 34,188 3 6,189 87 60,190 73 57,191 17 16,192 0 0,193 5 3,194 60 34,195 53 33,196 43 24,197 11 12,198 71 52,199 56 41,200 54 37,201 55 33,202 55 27,203 9 16,204 1 3,205 14 8,206 52 34,207 49 29,208 40 17,209 21 14,210 15 8,211 4 4,212 6 6,214 3 4,215 0 0,
222 70 39,223 77 44,224 48 35,225 3 4,226 80 62,227 76 44,228 49 30,229 45 39,230 19 22,231 61 43,232 56 34,233 79 58,234 68 47,235 18 21,236 54 35,237 41 25,238 37 23,239 28 18,240 1 1,241 0 0,242 34 20,244 45 27,245 20 18,246 55 28,247 46 28,248 50 36,249 25 17,250 16 9,251 5 5,252 0 0,
263 65 50,264 62 35,265 89 63,266 79 46,267 71 42,268 46 38,269 61 43,270 61 38,271 82 53,272 58 43,273 51 30,274 49 30,275 41 22,276 24 14,277 16 10,278 0 0,
281 51 24,282 48 23,283 16 12,284 71 40,285 52 24,286 45 17,287 26 13,288 13 9,289 7 11,291 44 24,292 26 19,293 21 13,294 7 9,295 5 7,296 4 3,297 1 2,298 23 24,299 53 33,300 48 24,301 42 22,302 23 19,304 22 14,305 12 10,306 0 0,
314 1 1,315 44 17,316 82 42,317 91 50,318 73 37,319 42 26,320 86 58,321 70 45,322 66 43,323 18 18,324 55 34,325 45 28,326 2 4,327 54 38,328 72 46,329 56 40,330 50 33,331 34 23,332 31 19,333 18 11,334 7 7,335 5 4,336 0 0,
343 72 40,344 80 46,345 66 45,346 67 33,347 60 42,349 56 52,350 65 52,351 63 42,352 44 34,353 38 24,354 33 22,356 21 11,357 10 8,358 5 6,360 0 0,368 10 12,369 24 25,370 29 32,371 76 59,372 79 59,373 19 10,374 1 2,375 4 3,376 77 51,377 60 34,378 64 37,379 38 20,380 29 18,381 19 14,382 14 10,383 0 0,
430 1 1,431 55 21,432 79 47,433 73 41,434 69 40,435 52 28,436 32 18,437 18 11,438 6 4,439 4 4,441 1 2,442 0 0,444 68 41,445 65 44,446 54 31,447 7 9,448 19 18,449 67 41,450 47 23,451 2 2,452 70 56,453 60 39,454 44 31,455 38 26,456 29 20,457 17 9,458 6 5,459 4 4,461 0 0,
471 70 44,472 68 41,473 57 36,474 57 38,475 55 36,476 43 26,477 41 27,478 31 27,479 0 0,482 1 1,483 48 35,484 64 45,485 63 43,486 58 37,487 42 26,488 40 25,489 34 21,490 25 19,491 13 11,492 5 5,494 0 0,
502 4 5,503 15 13,504 15 15,505 55 38,506 53 32,507 13 12,508 2 2,509 50 37,510 49 32,512 36 22,513 21 15,514 12 8,515 0 0,531 1 1,532 0 0,
535 41 19,536 61 45,537 73 47,539 66 37,540 65 35,541 56 29,542 52 31,543 25 20,544 60 36,545 82 48,546 70 36,547 62 28,548 45 21,549 32 18,550 52 31,551 49 29,552 9 19,553 43 22,554 55 23,556 31 17,557 16 9,558 2 2,559 3 4,560 28 22,561 43 27,562 39 24,563 23 21,564 37 26,565 40 23,566 29 19,567 24 18,568 23 15,569 22 13,570 13 9,571 0 0,580 1 1,581 0 0,
583 64 37,584 54 29,585 8 9,586 64 45,587 67 44,588 70 37,589 56 37,590 52 30,592 55 41,593 55 40,594 55 37,595 67 42,596 57 25,597 31 16,598 2 3,599 54 38,600 49 30,601 41 21,602 22 12,603 4 8,604 3 7,605 25 17,606 18 12,607 6 7,608 51 27,609 52 27,610 42 23,611 27 14,612 16 9,613 13 9,614 11 8,616 1 1,617 11 8,618 38 21,619 37 21,620 27 16,621 18 12,622 12 9,623 3 3,624 0 0,
632 1 1,633 5 5,634 80 51,636 46 28,637 28 26,638 82 49,639 57 42,640 40 29,641 62 49,642 58 36,643 62 42,644 60 30,645 51 26,646 22 13,647 12 12,648 53 34,649 51 34,650 48 37,651 48 28,652 33 25,654 7 12,655 51 32,656 57 38,657 49 27,658 63 49,659 55 36,660 46 26,661 31 18,662 15 10,663 10 6,664 0 0,
672 4 3,673 68 48,674 24 18,675 14 13,676 53 29,677 52 29,678 3 3,679 58 39,680 49 33,681 76 45,682 59 40,683 49 35,684 49 34,685 48 32,686 32 20,687 25 20,688 31 21,689 22 15,690 29 26,691 63 31,692 80 44,693 48 31,694 33 18,695 16 10,696 14 13,697 11 12,698 5 4,699 0 0,701 20 11,702 38 21,703 45 34,704 43 34,705 32 19,706 22 15,707 16 10,708 5 4,709 0 0,
718 58 55,719 72 63,720 64 45,721 68 47,722 69 43,723 51 41,724 18 27,725 19 20,726 80 64,727 77 64,728 75 51,729 18 12,730 10 9,731 87 60,732 49 30,733 4 3,734 0 0,735 16 16,736 60 34,737 53 33,738 8 8,739 57 26,740 71 52,741 55 41,742 56 36,743 55 33,744 35 20,745 6 8,746 1 1,747 52 34,748 51 32,749 41 21,750 29 16,751 19 9,752 4 4,753 6 6,755 4 4,756 1 1,757 0 0,
766 9 8,767 70 31,768 48 27,769 3 3,770 93 71,771 75 46,772 49 36,773 52 37,774 54 38,775 15 21,776 34 27,777 37 24,778 62 38,779 60 38,780 50 34,781 63 42,782 50 28,783 43 24,784 25 16,785 1 1,786 0 0,791 28 15,792 47 22,793 52 27,794 53 29,795 10 12,796 52 32,797 48 31,798 45 30,799 21 14,800 10 10,801 4 4,802 0 0,
816 65 50,817 64 50,818 89 63,819 79 46,820 70 40,821 64 35,822 59 35,823 61 37,824 82 53,825 64 43,826 53 29,827 50 29,828 32 20,829 22 14,830 10 6,831 0 0,834 44 21,835 51 24,836 14 14,837 71 40,838 53 32,839 51 25,840 30 16,841 26 14,842 12 10,843 2 3,844 44 26,845 42 24,846 13 11,847 7 7,849 5 5,850 4 4,851 9 9,852 47 33,853 53 33,854 45 26,855 32 20,856 27 16,857 23 13,858 19 11,859 1 1,860 0 0,
870 4 5,871 58 30,872 65 36,873 52 29,874 39 18,875 61 41,876 61 41,877 51 31,878 16 10,879 39 24,880 32 22,881 6 8,882 15 20,883 51 33,884 40 26,885 35 20,886 27 15,887 24 14,888 14 8,889 5 6,891 0 0,900 68 38,901 65 39,902 61 38,903 57 38,904 52 32,905 53 40,906 54 42,907 63 44,908 58 43,909 47 32,910 46 30,911 32 26,912 31 19,913 24 16,914 20 14,915 10 8,916 6 6,918 0 0,
926 1 1,927 9 8,928 18 14,929 21 20,930 56 42,931 53 36,932 9 8,933 0 0,934 2 2,935 54 37,936 45 26,938 30 20,939 22 15,940 16 10,941 9 7,942 0 0`
  .split(',').map(p => p.trim().split(/\s+/).map(Number));

let wave = '';
peaks.forEach(([x, up, down], i) => {
  const next = peaks[i + 1];
  if (up) wave += `M${x} ${206 - up}H${next[0]}V${207 + down}H${x}z`;
});

const rows = [17, 48, 80, 111, 143, 174, 237, 268, 300, 331, 363, 394];
let grid = rows.map(y => `M0 ${y}h948v1h-948z`).join('');
for (let x = 0; x < 948; x += 49) grid += `M${x} 0h1v414h-1z`;

document.querySelectorAll('.track').forEach((track, n) => {
  track.innerHTML = `<defs><clipPath id="sel${n}"><path d="M220 0h58v414h-58z"/></clipPath></defs>
    <g shape-rendering="crispEdges">
      <path d="${grid}" fill="#174317"/><path d="${wave}" fill="#55f8ae"/>
      <path d="M0 206h948v1H0z" fill="#67dc9a"/><path d="M0 21h948v1H0zM0 391h948v1H0z" fill="#e4eee4"/>
      <g clip-path="url(#sel${n})"><path d="M220 0h58v414h-58z" fill="#dcdce2"/><path d="${grid}" fill="#c9d3d1"/>
      <path d="${wave}" fill="#204534"/><path d="M220 206h58v1h-58z" fill="#4c4437"/></g>
    </g>`;
});

document.querySelectorAll('.level-ticks').forEach(svg => {
  let d = '';
  for (let i = -32; i <= 32; i++) {
    const y = Math.round(206 + i * 6.29) + 0.5;
    d += `M0 ${y}h${i % 5 ? 1 : 3}`;
  }
  svg.innerHTML = `<path d="${d}"/>`;
});

let ticks = '';
for (let i = 0; i < 97; i++) ticks += `M${Math.round(i * 9.8) + 0.5} 0v${i % 5 ? 2 : 4}`;
document.querySelector('.time-ticks').innerHTML = `<path d="${ticks}"/>`;

let marks = '';
for (let i = 0; i <= 75; i++) marks += `M${Math.round(i * 17.58) + 0.5} 0v${i % 3 ? 1 : 3}`;
document.querySelector('.meter-ticks').innerHTML = `<path d="${marks}"/>`;
```
